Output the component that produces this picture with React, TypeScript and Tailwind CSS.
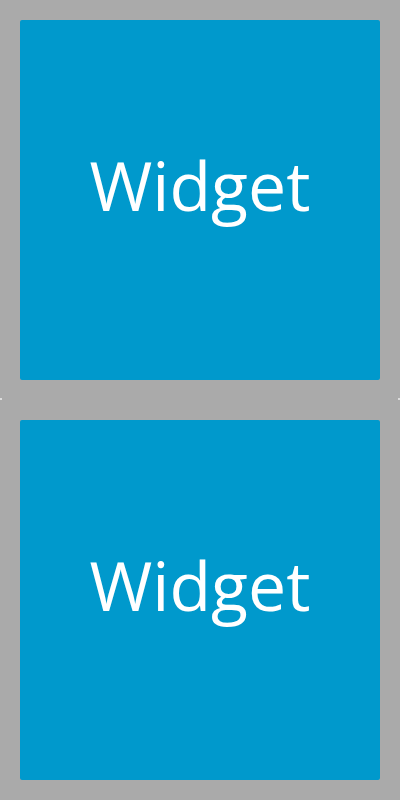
import React from "react";

function Tile() {
  return (
    <div className="p-5 h-[400px]">
      <div className="h-full w-full rounded-[2px] bg-[#0099cc] flex items-center justify-center">
        <span className="text-white text-[68px] leading-none font-['Open_Sans',sans-serif] -mt-[31px]">Widget</span>
      </div>
    </div>
  );
}

export default function App() {
  return (
    <div className="relative w-[400px] h-[800px] bg-[#aaaaaa] flex flex-col">
      <Tile />
      <Tile />
      <div className="absolute left-0 top-[398px] w-[2px] h-[2px] bg-[#dddddd]" />
      <div className="absolute right-0 top-[398px] w-[2px] h-[2px] bg-[#dddddd]" />
    </div>
  );
}
